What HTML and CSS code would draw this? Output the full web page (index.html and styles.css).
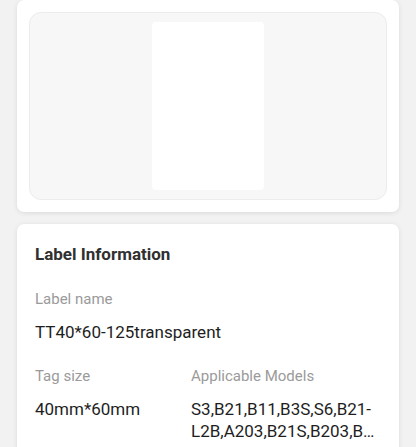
FILE: index.html
```html
<!DOCTYPE html>
<html>
<head>
<meta charset="utf-8">
<link rel="stylesheet" href="styles.css">
</head>
<body>
<div class="page">
  <div class="card preview-card">
    <div class="preview">
      <div class="label"></div>
    </div>
  </div>
  <div class="card info-card">
    <div class="title">Label Information</div>
    <div class="field">
      <div class="key">Label name</div>
      <div class="val">TT40*60-125transparent</div>
    </div>
    <div class="row">
      <div class="field col">
        <div class="key">Tag size</div>
        <div class="val">40mm*60mm</div>
      </div>
      <div class="field col">
        <div class="key">Applicable Models</div>
        <div class="val clamp">S3,B21,B11,B3S,S6,B21-L2B,A203,B21S,B203,B1,B3,B21C2B,B21PRO</div>
      </div>
    </div>
  </div>
</div>
</body>
</html>
```
FILE: styles.css
```css
html, body {
  margin: 0;
  padding: 0;
  background: #f2f2f2;
  font-family: Roboto, "Noto Sans", sans-serif;
  overflow: hidden;
}
.page {
  padding: 0 17px;
  height: 447px;
  overflow: hidden;
}
.card {
  background: #fff;
  border-radius: 7px;
  box-shadow: 0 1px 5px rgba(0,0,0,0.10);
}
.preview-card {
  height: 188px;
  padding: 12px;
}
.preview {
  padding: 9px 0;
  background: #f7f7f7;
  border: 1px solid #ececec;
  border-radius: 12px;
  display: flex;
  justify-content: center;
  height: 168px;
}
.label {
  width: 112px;
  height: 168px;
  background: #fff;
  border-radius: 4px;
}
.info-card {
  margin-top: 12px;
  padding: 18px 18px 20px;
  height: 300px;
}
.title {
  font-size: 17px;
  font-weight: 700;
  color: #303030;
  line-height: 24px;
}
.field {
  margin-top: 23px;
}
.key {
  font-size: 15px;
  color: #9a9a9a;
  line-height: 20px;
}
.val {
  margin-top: 12px;
  font-size: 17px;
  color: #1e1e1e;
  line-height: 22px;
}
.row {
  display: flex;
}
.col {
  flex: 0 0 156px;
  min-width: 0;
}
.col + .col {
  flex: 1 1 0;
}
.clamp {
  display: -webkit-box;
  -webkit-line-clamp: 2;
  -webkit-box-orient: vertical;
  overflow: hidden;
  overflow-wrap: anywhere;
  padding-right: 6px;
}
```
